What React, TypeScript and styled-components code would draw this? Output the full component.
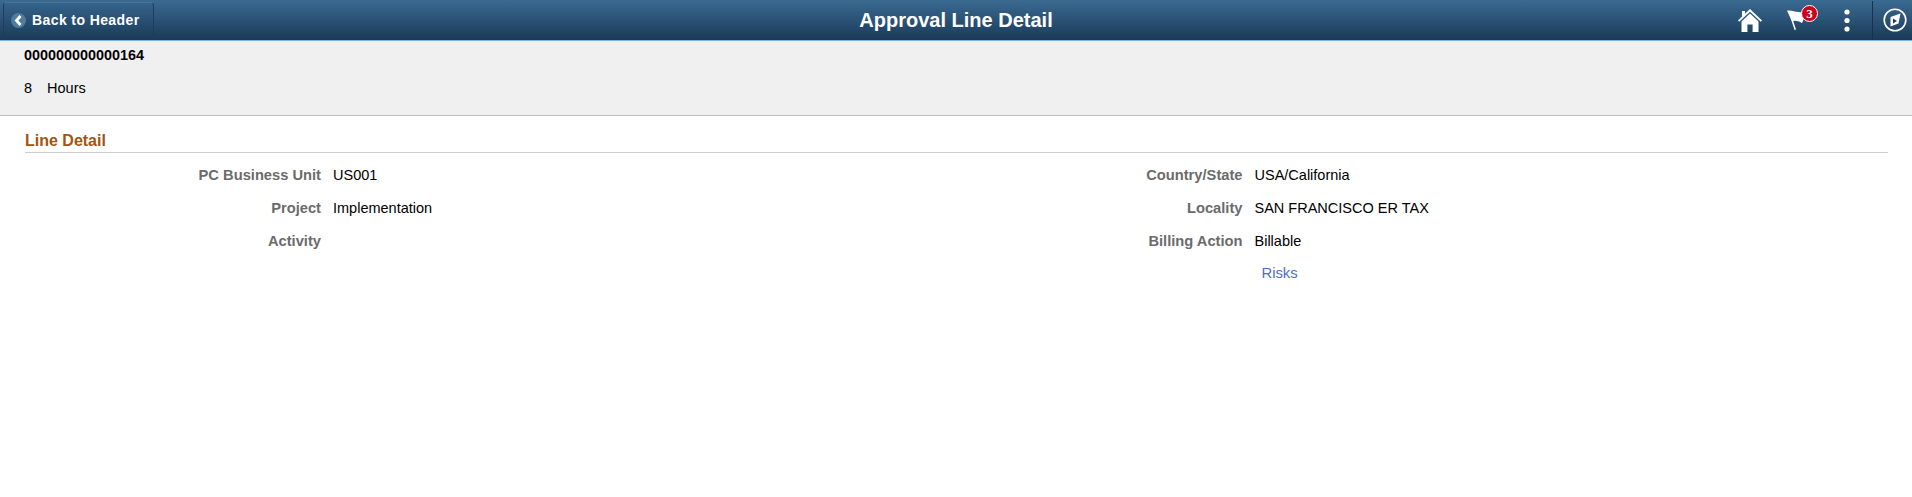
import React from 'react';
import styled, { createGlobalStyle } from 'styled-components';

const GlobalStyle = createGlobalStyle`
  html, body {
    margin: 0;
    padding: 0;
    background: #fff;
    font-family: "Liberation Sans", Arial, sans-serif;
    font-size: 14.5px;
    color: #000;
  }
`;

const Banner = styled.header`
  display: grid;
  grid-template-columns: 1fr auto 1fr;
  align-items: center;
  height: 40px;
  background: linear-gradient(to bottom, #3a6a92 0%, #1a3a58 100%);
  border-bottom: 1px solid #7fb2dc;
`;

const BackButton = styled.button`
  display: flex;
  align-items: center;
  justify-self: start;
  gap: 6px;
  width: 151px;
  height: 36px;
  margin-left: 3px;
  padding: 0 0 0 7px;
  border: 1px solid #1d3d5a;
  border-top-color: #4a7597;
  border-radius: 4px;
  background: linear-gradient(to bottom, #35638a 0%, #1c3e5c 100%);
  color: #fff;
  font: bold 14px "Liberation Sans", Arial, sans-serif;
  letter-spacing: 0.4px;
`;

const Title = styled.h1`
  margin: 0;
  color: #fff;
  font-size: 20px;
  font-weight: bold;
`;

const Actions = styled.div`
  display: flex;
  align-items: center;
  justify-self: end;
  height: 40px;
`;

const IconSlot = styled.div<{ $width: number; $shift?: number }>`
  position: relative;
  display: flex;
  align-items: center;
  justify-content: center;
  box-sizing: border-box;
  width: ${p => p.$width}px;
  height: 40px;
  padding-right: ${p => p.$shift || 0}px;
`;

const Badge = styled.span`
  position: absolute;
  top: 5px;
  left: 26px;
  display: flex;
  align-items: center;
  justify-content: center;
  box-sizing: border-box;
  width: 17px;
  height: 17px;
  border: 1.5px solid #fff;
  border-radius: 50%;
  background: #d0021b;
  color: #fff;
  font-family: "Liberation Serif", serif;
  font-size: 13px;
  font-weight: bold;
`;

const NavSlot = styled.div`
  display: flex;
  align-items: center;
  justify-content: center;
  box-sizing: border-box;
  width: 40px;
  height: 39px;
  margin-left: 3px;
  padding-left: 4px;
  border-left: 1px solid #16324c;
`;

const Summary = styled.section`
  display: flex;
  flex-direction: column;
  box-sizing: border-box;
  height: 75px;
  padding: 6px 24px 0;
  background: #f0f0f0;
  border-bottom: 1px solid #bdbdbd;
`;

const SummaryId = styled.div`
  height: 16px;
  line-height: 16px;
  font-size: 14.4px;
  font-weight: bold;
`;

const SummaryHours = styled.div`
  display: flex;
  gap: 15px;
  margin-top: 17px;
  line-height: 16px;
`;

const Content = styled.main`
  padding: 15px 24px 0 25px;
`;

const SectionTitle = styled.h2`
  margin: 0;
  padding-bottom: 2px;
  border-bottom: 1px solid #ccc;
  color: #a3540f;
  font-size: 16px;
  line-height: 19px;
  font-weight: bold;
`;

const Columns = styled.div`
  display: grid;
  grid-template-columns: 921.5px 1fr;
  padding-top: 5px;
`;

const Column = styled.div`
  display: flex;
  flex-direction: column;
`;

const Row = styled.div`
  display: grid;
  grid-template-columns: 296px 1fr;
  column-gap: 12px;
  align-items: center;
  height: 33px;
`;

const Label = styled.span`
  color: #6b6b6b;
  font-size: 14.7px;
  font-weight: bold;
  text-align: right;
`;

const Value = styled.span`
  color: #000;
`;

const RiskLink = styled.a`
  grid-column: 2;
  margin: 0 0 2px 7px;
  color: #4a6fcb;
  font-size: 14.8px;
  text-decoration: none;
`;

const leftRows = [
  ['PC Business Unit', 'US001'],
  ['Project', 'Implementation'],
  ['Activity', ''],
];

const rightRows = [
  ['Country/State', 'USA/California'],
  ['Locality', 'SAN FRANCISCO ER TAX'],
  ['Billing Action', 'Billable'],
];

const BackIcon = () => (
  <svg width="15" height="15" viewBox="0 0 15 15">
    <circle cx="7.5" cy="7.5" r="7.5" fill="#4f7ba0" />
    <path d="M9.5 3 L5.5 7.5 L9.5 12" fill="none" stroke="#fff" strokeWidth="2.8" />
  </svg>
);

const HomeIcon = () => (
  <svg width="24" height="23" viewBox="0 0 24 23" fill="#fff">
    <path d="M12 0 L24 11.5 L22.8 12.8 L12 2.8 L1.2 12.8 L0 11.5 L4 7.6 V2 H7 V4.8 Z" />
    <path d="M12 4.6 L20.5 12.4 V23 H14.6 V15.5 H9.4 V23 H3.5 V12.4 Z" />
  </svg>
);

const FlagIcon = () => (
  <svg width="20" height="20" viewBox="0 0 20 20" fill="#fff">
    <path d="M0 0.5 C5 0 10 3 20 2 L15 13 C11 11 8 10 5 11.5 Z" />
    <path d="M3.6 8 L5.2 8 L9 19.4 L7.6 20 Z" />
  </svg>
);

const DotsIcon = () => (
  <svg width="6" height="23" viewBox="0 0 6 23" fill="#fff">
    <circle cx="3" cy="3" r="2.6" />
    <circle cx="3" cy="11.5" r="2.6" />
    <circle cx="3" cy="20" r="2.6" />
  </svg>
);

const NavIcon = () => (
  <svg width="24" height="24" viewBox="0 0 24 24">
    <circle cx="12" cy="12" r="10.8" fill="none" stroke="#fff" strokeWidth="1.6" />
    <path d="M7.5 9 L17.5 5.5 L15.5 15.5 L7.5 18.5 Z" fill="#fff" />
    <path d="M10 10.5 L14 13 L10 15.5 Z" fill="#1d3f5e" />
  </svg>
);

const App: React.FC = () => {
  return (
    <>
      <GlobalStyle />
      <Banner>
        <BackButton>
          <BackIcon />
          Back to Header
        </BackButton>
        <Title>Approval Line Detail</Title>
        <Actions>
          <IconSlot $width={50}>
            <HomeIcon />
          </IconSlot>
          <IconSlot $width={50} $shift={6}>
            <FlagIcon />
            <Badge>3</Badge>
          </IconSlot>
          <IconSlot $width={44}>
            <DotsIcon />
          </IconSlot>
          <NavSlot>
            <NavIcon />
          </NavSlot>
        </Actions>
      </Banner>
      <Summary>
        <SummaryId>000000000000164</SummaryId>
        <SummaryHours>
          <span>8</span>
          <span>Hours</span>
        </SummaryHours>
      </Summary>
      <Content>
        <SectionTitle>Line Detail</SectionTitle>
        <Columns>
          <Column>
            {leftRows.map(([label, value]) => (
              <Row key={label}>
                <Label>{label}</Label>
                <Value>{value}</Value>
              </Row>
            ))}
          </Column>
          <Column>
            {rightRows.map(([label, value]) => (
              <Row key={label}>
                <Label>{label}</Label>
                <Value>{value}</Value>
              </Row>
            ))}
            <Row>
              <RiskLink href="#">Risks</RiskLink>
            </Row>
          </Column>
        </Columns>
      </Content>
    </>
  );
};

export default App;
